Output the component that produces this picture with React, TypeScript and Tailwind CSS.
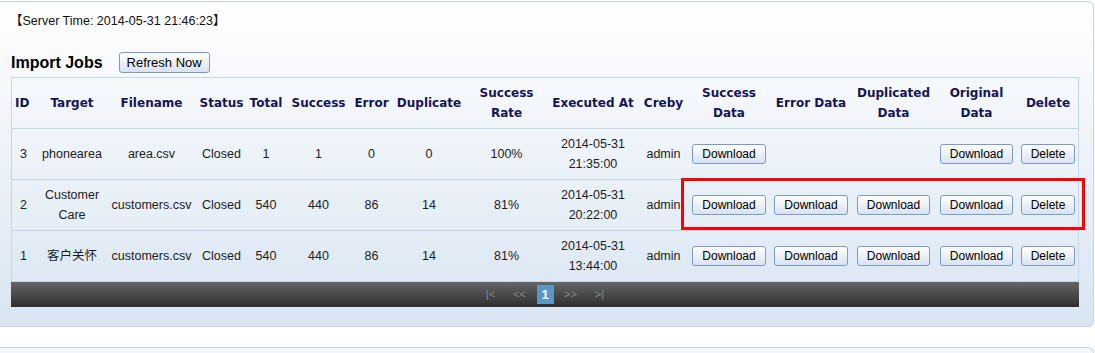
import React from "react";

type Cell = string | string[] | "DL" | "DEL" | null;

const widths = [27, 68, 91, 49, 40, 65, 41, 74, 81, 92, 49, 82, 82, 83, 83, 61];

const headers: string[][] = [
  ["ID"],
  ["Target"],
  ["Filename"],
  ["Status"],
  ["Total"],
  ["Success"],
  ["Error"],
  ["Duplicate"],
  ["Success", "Rate"],
  ["Executed At"],
  ["Creby"],
  ["Success", "Data"],
  ["Error Data"],
  ["Duplicated", "Data"],
  ["Original", "Data"],
  ["Delete"],
];

const rows: Cell[][] = [
  ["3", "phonearea", "area.csv", "Closed", "1", "1", "0", "0", "100%", ["2014-05-31", "21:35:00"], "admin", "DL", null, null, "DL", "DEL"],
  ["2", ["Customer", "Care"], "customers.csv", "Closed", "540", "440", "86", "14", "81%", ["2014-05-31", "20:22:00"], "admin", "DL", "DL", "DL", "DL", "DEL"],
  ["1", "客户关怀", "customers.csv", "Closed", "540", "440", "86", "14", "81%", ["2014-05-31", "13:44:00"], "admin", "DL", "DL", "DL", "DL", "DEL"],
];

const Button = ({ text }: { text: string }) => (
  <button className="h-[20px] px-[9px] border border-[#7a9bcb] rounded-[3px] bg-linear-to-b from-white to-[#d9e2f1] text-[12px] leading-none text-black whitespace-nowrap">
    {text}
  </button>
);

const renderCell = (cell: Cell) => {
  if (cell === null) return null;
  if (cell === "DL") return <Button text="Download" />;
  if (cell === "DEL") return <Button text="Delete" />;
  if (Array.isArray(cell))
    return cell.map((line, i) => (
      <span key={i} className="block">
        {line}
      </span>
    ));
  return cell;
};

export default function App() {
  return (
    <div className="relative w-[1095px] h-[353px] overflow-hidden bg-white pt-px font-['Liberation_Sans','Noto_Sans_CJK_SC',sans-serif]">
      <div className="w-[1094px] h-[326px] border-t border-r border-b border-[#c5d3e2] rounded-r-[6px] bg-linear-to-b from-white to-[#d9e5f2]">
        <div className="pl-[10px] pt-[11px] text-[12.5px] leading-4 text-[#111]">
          【Server Time: 2014-05-31 21:46:23】
        </div>

        <div className="mt-[22px] h-[23px] pl-[11px] flex items-center">
          <span className="text-[16px] font-bold text-black">Import Jobs</span>
          <button className="ml-[16px] h-[21px] px-[7px] border border-[#7a9bcb] rounded-[3px] bg-linear-to-b from-white to-[#d9e2f1] text-[13px] leading-none text-black">
            Refresh Now
          </button>
        </div>

        <div className="mt-[3px] ml-[11px] w-[1068px]">
          <table className="table-fixed w-[1068px] border-separate border-spacing-0">
            <colgroup>
              {widths.map((w, i) => (
                <col key={i} style={{ width: w }} />
              ))}
            </colgroup>
            <thead>
              <tr>
                {headers.map((h, i) => (
                  <th
                    key={i}
                    className={`h-[52px] border-t border-b border-[#c3d6ec] px-0 align-middle font-['DejaVu_Sans',sans-serif] text-[12px] leading-5 font-bold text-[#14145a] whitespace-nowrap ${
                      i === 0 ? "border-l text-left pl-[3px]" : "text-center"
                    } ${i === widths.length - 1 ? "border-r" : ""}`}
                  >
                    {h.map((line, j) => (
                      <span key={j} className="block">
                        {line}
                      </span>
                    ))}
                  </th>
                ))}
              </tr>
            </thead>
            <tbody>
              {rows.map((row, r) => (
                <tr key={r}>
                  {row.map((cell, i) => (
                    <td
                      key={i}
                      className={`h-[51px] border-b border-[#c3d6ec] px-0 align-middle text-[12.5px] leading-5 text-[#1c1c1c] whitespace-nowrap ${
                        i === 0 ? "border-l text-left pl-[8px]" : "text-center"
                      } ${i === widths.length - 1 ? "border-r" : ""}`}
                    >
                      {renderCell(cell)}
                    </td>
                  ))}
                </tr>
              ))}
            </tbody>
          </table>

          <div className="h-[25px] bg-linear-to-b from-[#666666] to-[#2f2f2f] flex items-center justify-center gap-[5px] text-[11px] text-[#8a8a8a]">
            <span className="w-[24px] text-center">|&lt;</span>
            <span className="w-[24px] text-center">&lt;&lt;</span>
            <span className="w-[17px] h-[19px] flex items-center justify-center bg-[#5b96c8] text-white font-bold text-[13px]">
              1
            </span>
            <span className="w-[24px] text-center">&gt;&gt;</span>
            <span className="w-[24px] text-center">&gt;|</span>
          </div>
        </div>
      </div>

      <div className="mt-[20px] w-[1094px] h-[10px] border-t border-r border-[#c5d3e2] rounded-tr-[6px] bg-[#f3f7fb]" />

      <div className="absolute left-[681px] top-[178px] w-[404px] h-[52px] border-[3px] border-[#ff0000] pointer-events-none" />
    </div>
  );
}
